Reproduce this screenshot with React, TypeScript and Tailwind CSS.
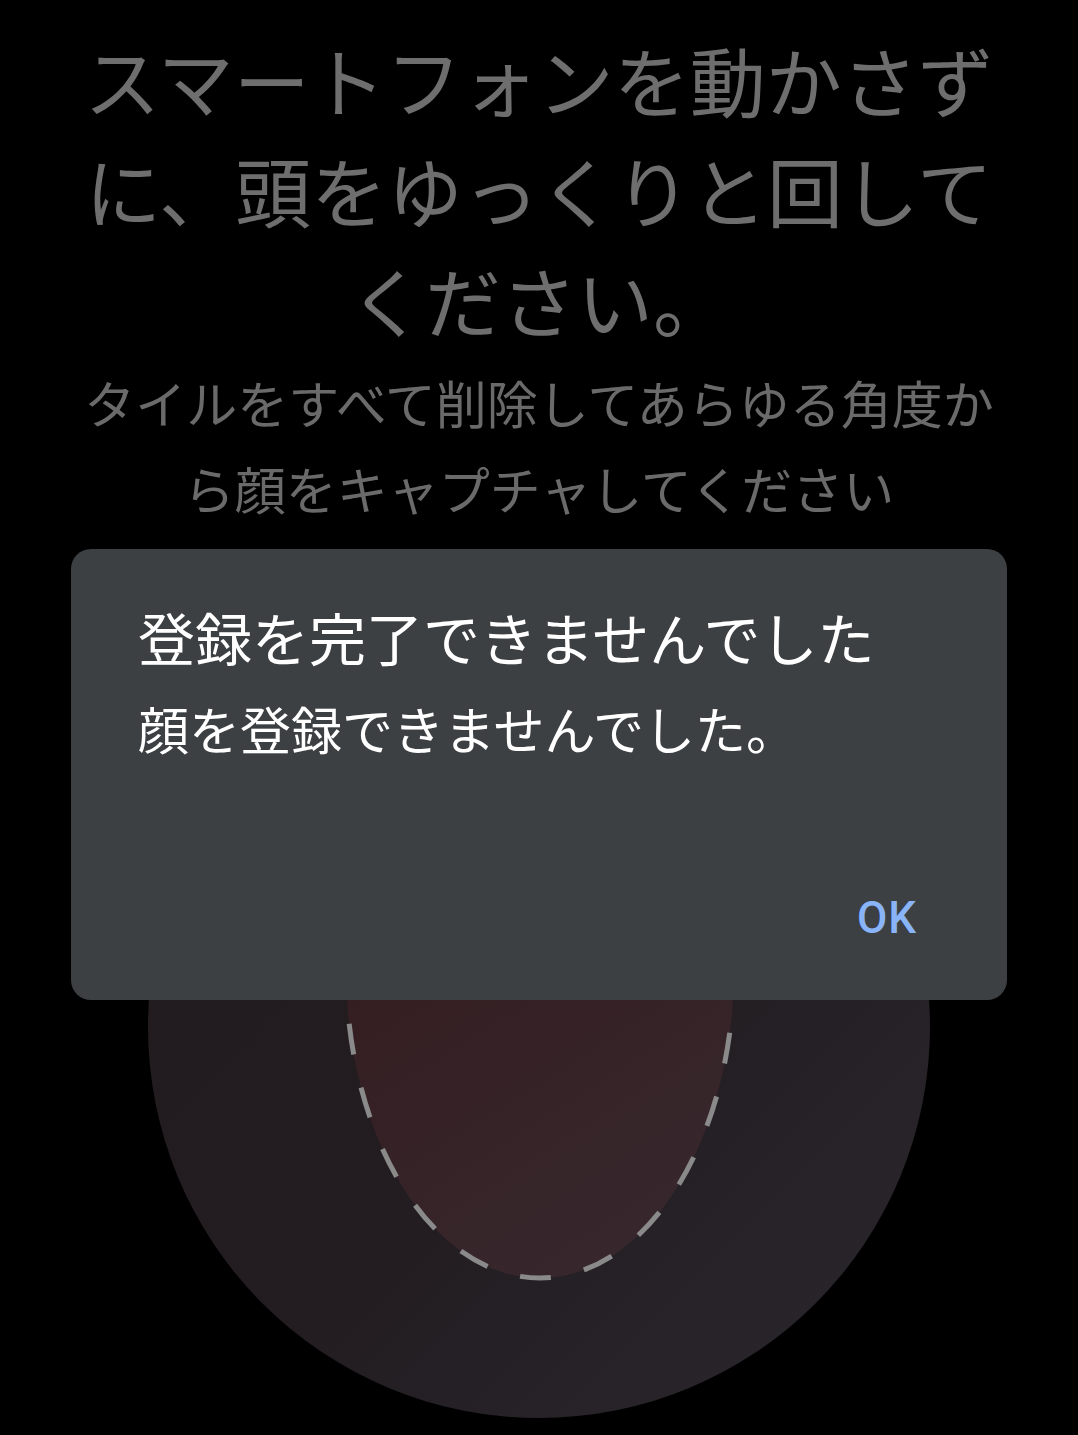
import React from "react";

const cjk = { fontFamily: '"Noto Sans CJK JP", "Noto Sans", sans-serif' };

function FacePreview() {
  return (
    <svg width="782" height="782" viewBox="0 0 782 782" className="block">
      <defs>
        <linearGradient id="outer" x1="0" y1="0" x2="1" y2="1">
          <stop offset="0%" stopColor="#211a1d" />
          <stop offset="55%" stopColor="#231d21" />
          <stop offset="100%" stopColor="#2a282e" />
        </linearGradient>
        <linearGradient id="inner" x1="0.3" y1="0" x2="0.7" y2="1">
          <stop offset="0%" stopColor="#351a1b" />
          <stop offset="50%" stopColor="#352024" />
          <stop offset="100%" stopColor="#37282d" />
        </linearGradient>
      </defs>
      <circle cx="391" cy="391" r="391" fill="url(#outer)" />
      <ellipse cx="392" cy="332" rx="194" ry="310" fill="url(#inner)" />
      <ellipse
        cx="392"
        cy="332"
        rx="194"
        ry="310"
        fill="none"
        stroke="#8a8a8a"
        strokeWidth="5"
        strokeDasharray="31 34"
      />
    </svg>
  );
}

export default function App() {
  return (
    <div className="relative min-h-[1435px] w-full overflow-hidden bg-black" style={cjk}>
      <h1 className="mx-auto w-[930px] pt-[24px] text-center text-[76px] font-normal leading-[110px] text-[#6e6e6e]">
        スマートフォンを動かさずに、頭をゆっくりと回してください。
      </h1>
      <p className="mx-auto mt-[5px] w-[930px] text-center text-[51px] leading-[86px] text-[#6a6a6a]">
        タイルをすべて削除してあらゆる角度から顔をキャプチャしてください
      </p>

      <div className="mx-auto mt-[105px] flex w-[782px] justify-center">
        <FacePreview />
      </div>

      <div className="absolute left-[71px] top-[549px] flex h-[451px] w-[936px] flex-col rounded-[20px] bg-[#3c4043]">
        <div className="px-[67px] pt-[51px]">
          <h2 className="text-[57px] font-normal leading-[72px] text-white">
            登録を完了できませんでした
          </h2>
          <p className="mt-[20px] text-[51px] leading-[72px] text-white">
            顔を登録できませんでした。
          </p>
        </div>
        <div className="mt-auto flex justify-end pb-[54px] pr-[90px]">
          <button
            className="text-[44px] font-medium leading-[56px] tracking-[1px] text-[#8ab4f8]"
            style={{ fontFamily: "Roboto, sans-serif" }}
          >
            OK
          </button>
        </div>
      </div>
    </div>
  );
}
